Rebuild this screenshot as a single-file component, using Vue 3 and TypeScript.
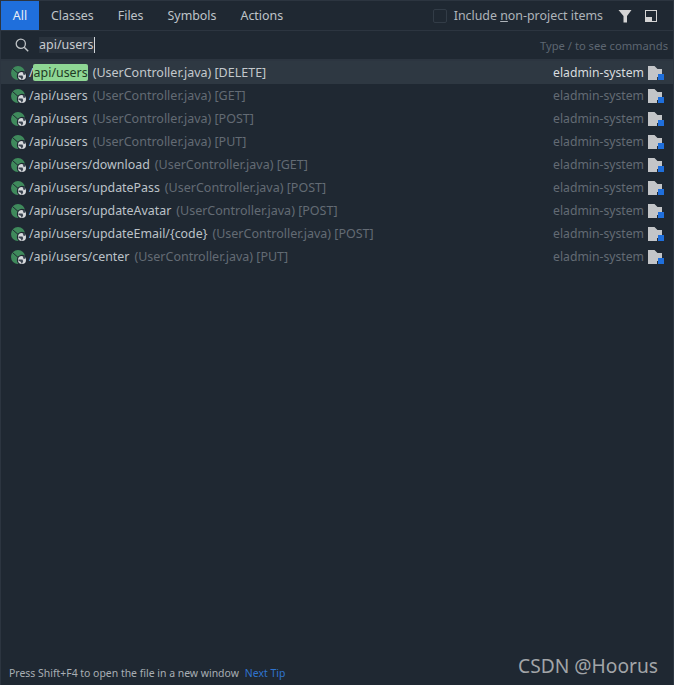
<script setup lang="ts">
interface Row { path: string; file: string; method: string }
const rows: Row[] = [
  { path: '/api/users', file: '(UserController.java)', method: '[DELETE]' },
  { path: '/api/users', file: '(UserController.java)', method: '[GET]' },
  { path: '/api/users', file: '(UserController.java)', method: '[POST]' },
  { path: '/api/users', file: '(UserController.java)', method: '[PUT]' },
  { path: '/api/users/download', file: '(UserController.java)', method: '[GET]' },
  { path: '/api/users/updatePass', file: '(UserController.java)', method: '[POST]' },
  { path: '/api/users/updateAvatar', file: '(UserController.java)', method: '[POST]' },
  { path: '/api/users/updateEmail/{code}', file: '(UserController.java)', method: '[POST]' },
  { path: '/api/users/center', file: '(UserController.java)', method: '[PUT]' },
]
const tabs = ['Classes', 'Files', 'Symbols', 'Actions']
</script>

<template>
  <div class="win">
    <header class="tabs">
      <div class="tab active">All</div>
      <div v-for="t in tabs" :key="t" class="tab">{{ t }}</div>
      <div class="spacer"></div>
      <span class="check"></span>
      <span class="include">Include <u>n</u>on-project items</span>
      <svg class="filter" width="14" height="14" viewBox="0 0 14 14"><path d="M0.500 1h13L9 7v6.500H5.500V7z" fill="#d4d4d4"/></svg>
      <svg class="dock" width="12" height="12" viewBox="0 0 12 12"><rect x="0.500" y="0.500" width="11" height="11" fill="none" stroke="#d4d4d4"/><rect x="1" y="7" width="6" height="4" fill="#d4d4d4"/></svg>
    </header>
    <div class="search">
      <svg class="glass" width="14" height="14" viewBox="0 0 14 14"><circle cx="5.800" cy="5.800" r="4.600" fill="none" stroke="#bfc3c6" stroke-width="1.300"/><path d="M9.200 9.200l4 4" stroke="#bfc3c6" stroke-width="1.400"/></svg>
      <div class="query"><span class="qtext">api/users</span><span class="caret"></span></div>
      <span class="hint">Type / to see commands</span>
    </div>
    <div class="list">
      <div v-for="(r, i) in rows" :key="i" class="row" :class="{ sel: i === 0 }">
        <svg class="bean" width="18" height="16" viewBox="0 0 18 16">
          <circle cx="7" cy="7" r="7" fill="#3f8a5c"/>
          <path d="M1.500 2.500l9 8" stroke="#1f2832" stroke-width="1"/>
          <circle cx="11" cy="10" r="5.200" fill="#1f2832"/>
          <circle cx="11" cy="10" r="4" fill="#d6d9dc"/>
          <path d="M7.500 9.500h4l0.700 1.800-1.300 2.700-1.200-2.300-2.200-1zM11.500 6h2.300l1 2-2 1.300z" fill="#3a4450"/>
        </svg>
        <span class="name">
          <template v-if="i === 0">/<mark>api/users</mark></template>
          <template v-else>{{ r.path }}</template>
        </span>
        <span class="meta">{{ r.file }} {{ r.method }}</span>
        <span class="module">eladmin-system</span>
        <svg class="folder" width="16" height="14" viewBox="0 0 16 14">
          <path d="M0 0h6.500l3 3H14v8H9v3H0z" fill="#c3c5c8"/>
          <rect x="10" y="8" width="6" height="6" fill="#1f6fdc"/>
        </svg>
      </div>
    </div>
    <footer class="foot">
      <span class="tip">Press Shift+F4 to open the file in a new window</span>
      <span class="next">Next Tip</span>
      <span class="mark-wm">CSDN @Hoorus</span>
    </footer>
  </div>
</template>

<style>
html, body { margin: 0; background: #1f2832; }
</style>

<style scoped>
.win {
  width: 674px;
  height: 685px;
  box-sizing: border-box;
  background: #1f2832;
  border: 1px solid #2c3540;
  border-bottom: none;
  display: flex;
  flex-direction: column;
  font-family: "Noto Sans", "Open Sans", sans-serif;
  font-size: 12.5px;
  color: #bcc2c8;
  overflow: hidden;
}
.tabs {
  height: 29px;
  display: flex;
  align-items: center;
  border-bottom: 1px solid #2c3540;
  flex: none;
  font-size: 12.4px;
}
.tab {
  height: 29px;
  line-height: 29px;
  padding: 0 12px;
  color: #bfc4c9;
}
.tab.active {
  background: #1f6fdc;
  color: #e8eef6;
  width: 38px;
  box-sizing: border-box;
  padding: 0;
  text-align: center;
}
.spacer { flex: 1; }
.check {
  width: 12px;
  height: 12px;
  border: 1px solid #323c47;
  border-radius: 2px;
  margin-right: 7px;
}
.include { color: #aeb4ba; margin-right: 15px; }
.filter { margin-right: 13px; }
.dock { margin-right: 16px; }
.search {
  height: 28px;
  display: flex;
  align-items: center;
  border-bottom: 2px solid #2c3540;
  flex: none;
}
.glass { margin-left: 14px; margin-right: 10px; }
.query { display: flex; align-items: center; flex: 1; }
.qtext { background: #2a333d; color: #c8ccd0; line-height: 16px; }
.caret { width: 1px; height: 16px; background: #d0d4d8; }
.hint { color: #5d6671; margin-right: 5px; font-size: 11.200px; }
.list { flex: 1; }
.row {
  height: 23px;
  display: flex;
  align-items: center;
  padding-left: 10px;
  padding-right: 9px;
  white-space: pre;
}
.row.sel { background: #2e3842; }
.bean { flex: none; margin-top: 2px; }
.name { color: #bcc2c8; margin-right: 5px; font-size: 12.400px; }
.sel .name { color: #d3d7db; }
mark {
  background: #8ed694;
  color: #1f3a24;
  border-radius: 2px;
  padding-left: 1px;
  margin-left: -1px;
}
.meta { color: #636b74; flex: 1; }
.sel .meta { color: #c3c8cc; }
.module { color: #636b74; margin-right: 4px; font-size: 12.200px; }
.sel .module { color: #d8dcdf; }
.folder { flex: none; margin-top: 1px; }
.foot {
  height: 26px;
  display: flex;
  align-items: center;
  padding: 1px 0 0 8px;
  box-sizing: border-box;
  font-size: 10.450px;
  flex: none;
  position: relative;
}
.tip { color: #a8aeb4; margin-right: 6px; }
.next { color: #2f74cf; }
.mark-wm {
  position: absolute;
  right: 15px;
  bottom: 6px;
  font-size: 19.200px;
  color: #a2a5a8;
}
</style>
